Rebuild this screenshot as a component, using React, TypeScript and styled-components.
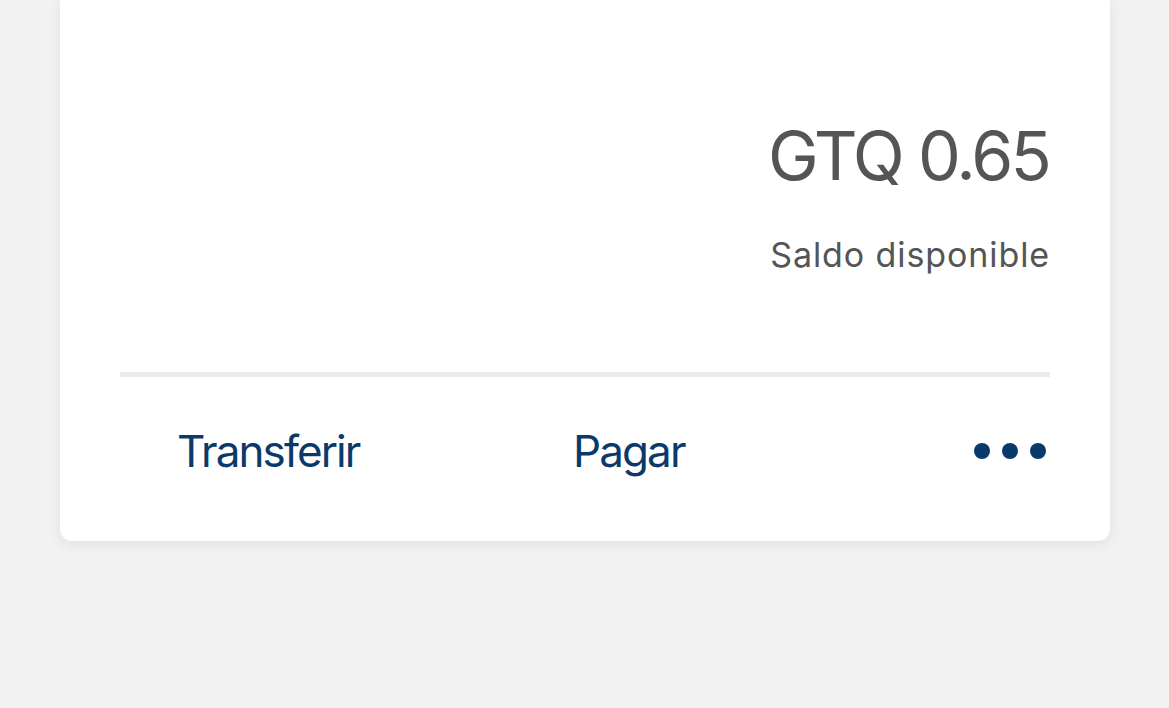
import styled, { createGlobalStyle } from "styled-components";

const GlobalStyle = createGlobalStyle`
  html, body {
    margin: 0;
    padding: 0;
    background: #f2f2f2;
    font-family: Inter, "Noto Sans", sans-serif;
  }
`;

const Page = styled.div`
  width: 1169px;
  height: 708px;
  overflow: hidden;
  padding: 0 59px 0 60px;
  box-sizing: border-box;
`;

const Card = styled.div`
  background: #ffffff;
  border-radius: 0 0 12px 12px;
  box-shadow: 0 3px 14px rgba(0, 0, 0, 0.08);
  padding: 113px 60px 64px;
`;

const Balance = styled.div`
  display: flex;
  flex-direction: column;
  align-items: flex-end;
  gap: 38px;
  color: #555555;
`;

const Amount = styled.div`
  font-size: 68px;
  line-height: 84px;
  letter-spacing: -2.9px;
  margin-right: 1px;
`;

const Caption = styled.div`
  font-size: 34px;
  line-height: 40px;
  letter-spacing: 0.9px;
`;

const Divider = styled.div`
  height: 5px;
  background: #ebebeb;
  margin: 97px 0 48px;
`;

const Actions = styled.div`
  display: grid;
  grid-template-columns: 396px 1fr auto;
  align-items: center;
  padding: 0 4px 0 57px;
`;

const Action = styled.div`
  font-size: 44px;
  line-height: 52px;
  letter-spacing: -1.9px;
  color: #0a3a6b;
`;

const More = styled.div`
  display: flex;
  gap: 12px;
`;

const Dot = styled.span`
  width: 16px;
  height: 16px;
  border-radius: 50%;
  background: #0a3a6b;
`;

export default function App() {
  return (
    <Page>
      <GlobalStyle />
      <Card>
        <Balance>
          <Amount>GTQ 0.65</Amount>
          <Caption>Saldo disponible</Caption>
        </Balance>
        <Divider />
        <Actions>
          <Action>Transferir</Action>
          <Action>Pagar</Action>
          <More>
            <Dot />
            <Dot />
            <Dot />
          </More>
        </Actions>
      </Card>
    </Page>
  );
}
